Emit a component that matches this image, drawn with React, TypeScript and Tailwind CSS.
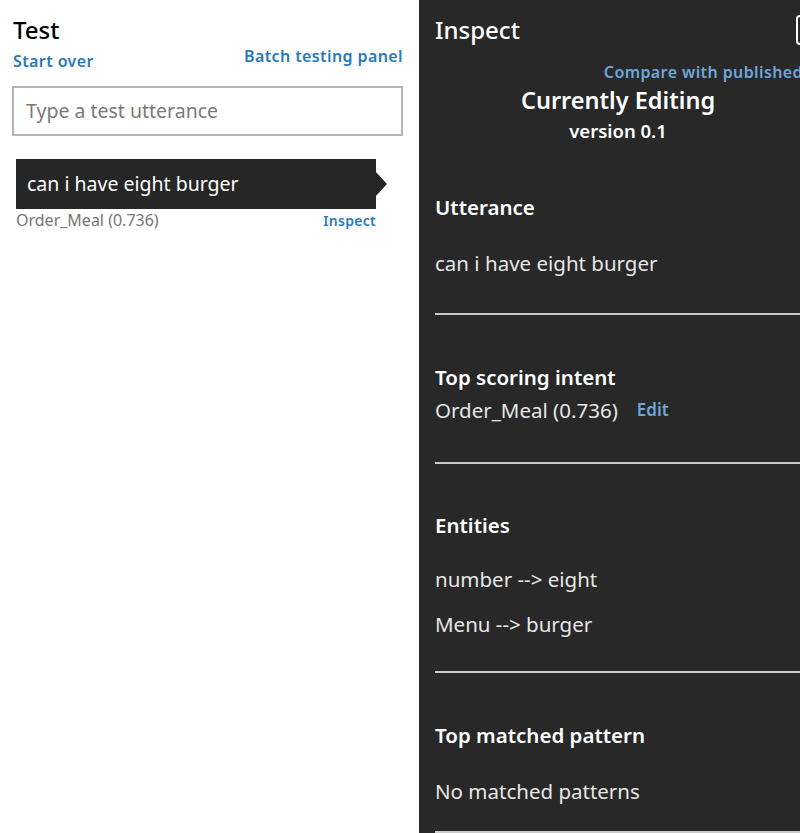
import React from "react";

const font = { fontFamily: '"Noto Sans", "Open Sans", sans-serif' };

function Divider({ mt }: { mt: string }) {
  return <div className={`${mt} h-[2px] bg-[#c9c9c9]`} />;
}

export default function App() {
  return (
    <div className="w-[800px] h-[833px] overflow-hidden flex bg-white" style={font}>
      {/* Left: Test panel */}
      <div className="w-[419px] shrink-0 bg-white pl-[12px] pr-[16px]">
        <div className="pt-[16px] pl-[1px] text-[24px] leading-[28px] font-medium text-black">Test</div>
        <div className="flex justify-between items-start mt-[2px]">
          <div className="mt-[5px] pl-[1px] text-[16px] leading-[20px] font-semibold text-[#2a7ab9] tracking-[0.4px]">Start over</div>
          <div className="text-[16px] leading-[20px] font-semibold text-[#2a7ab9] tracking-[0.4px]">Batch testing panel</div>
        </div>
        <div className="mt-[15px] h-[50px] border-[2px] border-[#b4b4b4] flex items-center pl-[12px] text-[19.5px] text-[#7a7a7a]">
          Type a test utterance
        </div>
        <div className="mt-[23px] ml-[4px] relative w-[360px] h-[50px] bg-[#262626] flex items-center pl-[11px] text-[19.5px] text-white">
          can i have eight burger
          <svg className="absolute left-[359px] top-[12px]" width="14" height="26" viewBox="0 0 14 26">
            <polygon points="0,0 12,13 0,26" fill="#262626" />
          </svg>
        </div>
        <div className="ml-[4px] w-[360px] flex justify-between items-center mt-[2px] h-[18px]">
          <span className="text-[16px] text-[#767676]">Order_Meal (0.736)</span>
          <span className="text-[14px] font-semibold text-[#2a7ab9] tracking-[0.3px]">Inspect</span>
        </div>
      </div>

      {/* Right: Inspect panel */}
      <div className="relative w-[398px] shrink-0 h-full bg-[#282828] pl-[16px] text-[#e6e6e6]">
        <div className="absolute left-[377px] top-[15px] w-[28px] h-[30px] rounded-[4px] border-[2px] border-white" />
        <div className="pt-[16px] text-[24px] leading-[28px] font-medium text-white">Inspect</div>
        <div className="mt-[18px] text-right text-[16px] leading-[20px] font-semibold text-[#6ea6dc] tracking-[0.4px] whitespace-nowrap pr-[0px] mr-[-2px] -ml-[200px]">
          <span className="inline-block pr-[16px]">Compare with published</span>
        </div>
        <div className="mt-[3px] -ml-[16px] text-center text-[23.5px] leading-[30px] font-semibold text-white">Currently Editing</div>
        <div className="mt-[5px] -ml-[16px] text-center text-[18.5px] leading-[22px] font-semibold text-white">version 0.1</div>

        <div className="mt-[53px] text-[20.5px] leading-[24px] font-semibold text-white">Utterance</div>
        <div className="mt-[32px] text-[20.5px] leading-[24px]">can i have eight burger</div>
        <Divider mt="mt-[38px]" />

        <div className="mt-[50px] text-[20.5px] leading-[24px] font-semibold text-white">Top scoring intent</div>
        <div className="mt-[9px] flex items-center text-[20.5px] leading-[24px]">
          <span>Order_Meal (0.736)</span>
          <span className="ml-[19px] text-[17px] font-semibold text-[#6ea6dc]">Edit</span>
        </div>
        <Divider mt="mt-[40px]" />

        <div className="mt-[49px] text-[20.5px] leading-[24px] font-semibold text-white">Entities</div>
        <div className="mt-[30px] text-[20.5px] leading-[24px]">number --&gt; eight</div>
        <div className="mt-[21px] text-[20.5px] leading-[24px]">Menu --&gt; burger</div>
        <Divider mt="mt-[35px]" />

        <div className="mt-[50px] text-[20.5px] leading-[24px] font-semibold text-white">Top matched pattern</div>
        <div className="mt-[32px] text-[20.5px] leading-[24px]">No matched patterns</div>
        <Divider mt="mt-[28px]" />
      </div>
    </div>
  );
}
